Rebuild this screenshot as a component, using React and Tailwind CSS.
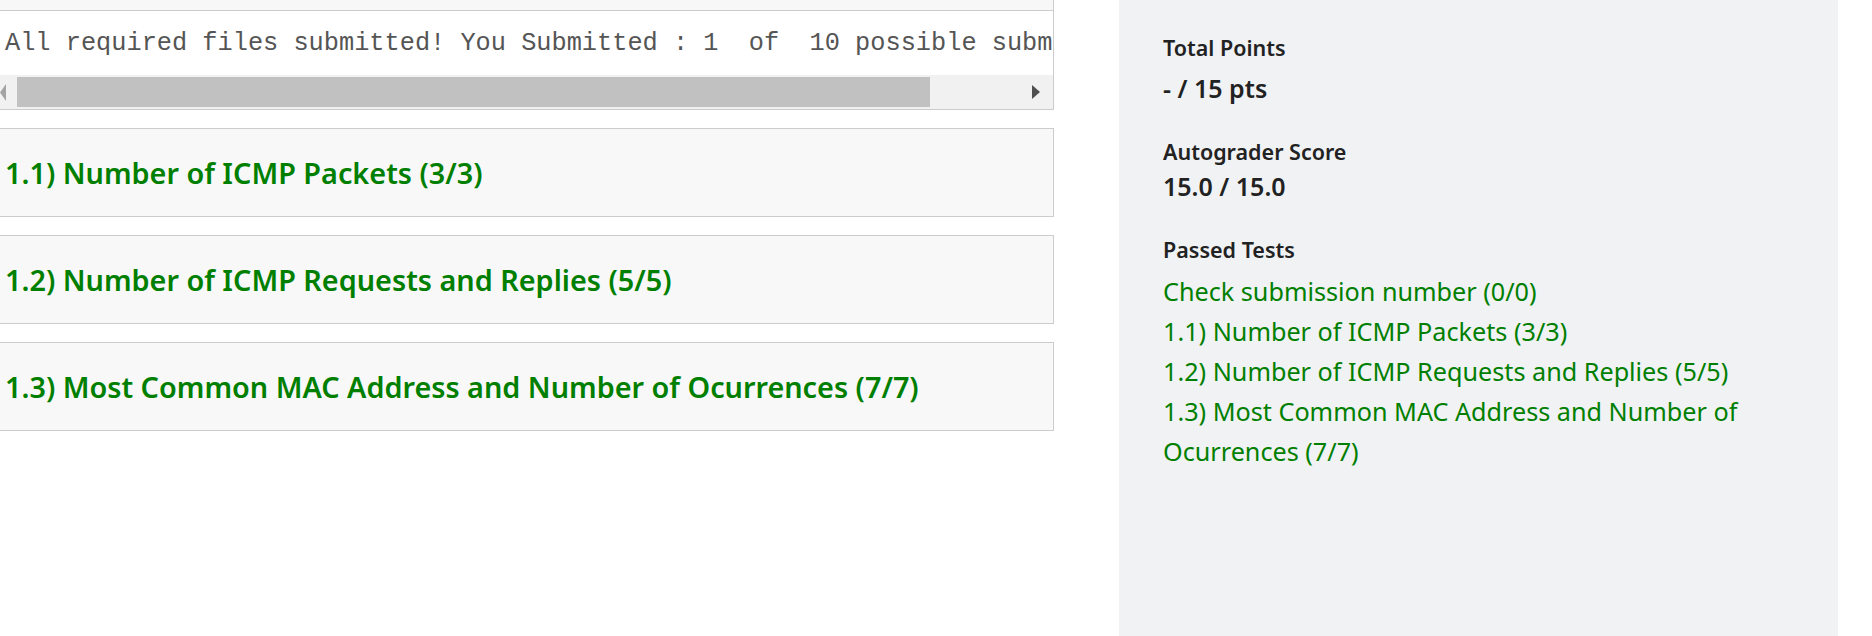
import React from 'react'

const tests = [
  '1.1) Number of ICMP Packets (3/3)',
  '1.2) Number of ICMP Requests and Replies (5/5)',
  '1.3) Most Common MAC Address and Number of Ocurrences (7/7)',
]

function OutputBox() {
  return (
    <div className="w-[1054px] border-r border-[#cccccc] overflow-hidden">
      {/* tail of the previous block */}
      <div className="h-[11px] bg-[#f7f7f7] border-b border-[#cccccc]" />
      <div className="bg-white border-b border-[#cccccc]">
        <pre className="h-[64px] pl-[5px] pt-[18px] text-[25.3px] leading-[30px] text-[#555555] font-['Liberation_Mono',monospace] whitespace-pre overflow-hidden">
          All required files submitted! You Submitted : 1  of  10 possible submissions
        </pre>
        {/* horizontal scrollbar */}
        <div className="h-[34px] bg-[#f1f1f1] flex items-center">
          <svg width="6" height="17" viewBox="0 0 6 17" className="shrink-0">
            <polygon points="6,0 6,17 0,8.5" fill="#a3a3a3" />
          </svg>
          <div className="ml-[11px] w-[913px] h-[30px] bg-[#c1c1c1]" />
          <div className="flex-1 flex justify-end pr-[13px]">
            <svg width="8" height="14" viewBox="0 0 8 14">
              <polygon points="0,0 8,7 0,14" fill="#505050" />
            </svg>
          </div>
        </div>
      </div>
    </div>
  )
}

export default function App() {
  return (
    <div className="flex w-[1872px] h-[636px] bg-white overflow-hidden font-['Noto_Sans',sans-serif]">
      {/* Main column */}
      <div className="w-[1054px] shrink-0">
        <OutputBox />
        <div className="mt-[18px] flex flex-col gap-[18px]">
          {tests.map((t) => (
            <div
              key={t}
              className="h-[89px] w-[1054px] bg-[#f8f8f8] border-y border-r border-[#cccccc] flex items-center pl-[5px]"
            >
              <h3 className="text-[28.8px] leading-[36px] font-semibold text-[#007f00]">{t}</h3>
            </div>
          ))}
        </div>
      </div>

      {/* Sidebar */}
      <aside className="ml-[65px] w-[719px] shrink-0 h-[636px] bg-[#f1f2f4] pl-[44px] pr-[44px] pt-[33px]">
        <dl className="text-[#222222]">
          <dt className="text-[21.5px] leading-[30px] font-semibold">Total Points</dt>
          <dd className="mt-[8px] text-[25px] leading-[34px] font-semibold">- / 15 pts</dd>

          <dt className="mt-[32px] text-[21.5px] leading-[30px] font-semibold">Autograder Score</dt>
          <dd className="mt-[2px] text-[25px] leading-[34px] font-semibold">15.0 / 15.0</dd>

          <dt className="mt-[32px] text-[21.5px] leading-[30px] font-semibold">Passed Tests</dt>
          <dd className="mt-[6px]">
            <ul className="text-[25.2px] leading-[40px] text-[#007f00]">
              <li>Check submission number (0/0)</li>
              {tests.map((t) => (
                <li key={t}>{t}</li>
              ))}
            </ul>
          </dd>
        </dl>
      </aside>
    </div>
  )
}
